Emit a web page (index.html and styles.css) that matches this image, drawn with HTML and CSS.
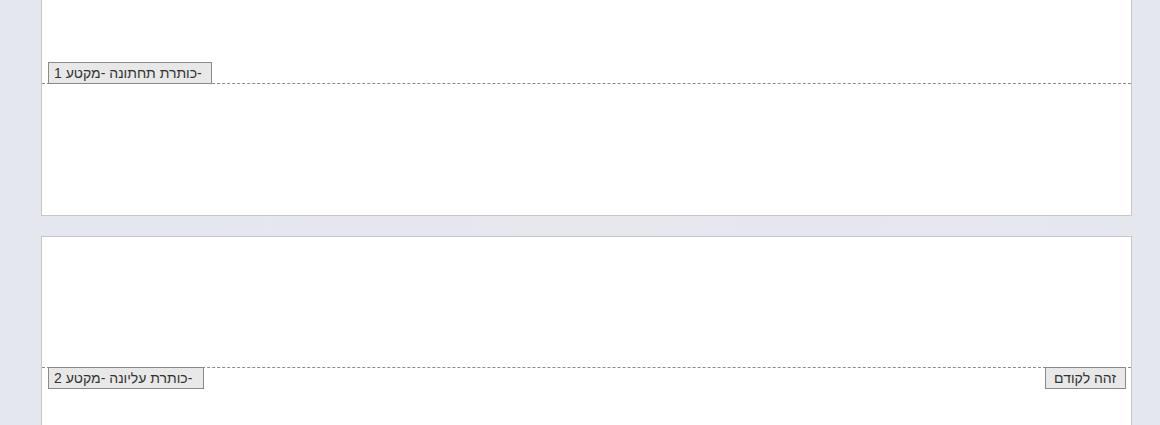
FILE: index.html
```html
<!DOCTYPE html>
<html lang="he">
<head>
<meta charset="utf-8">
<link rel="stylesheet" href="styles.css">
</head>
<body>
<div class="canvas">
  <section class="page page-first">
    <div class="footer-zone">
      <div class="divider divider-bottom">
        <span class="tag">כותרת תחתונה -מקטע 1-</span>
      </div>
    </div>
  </section>
  <section class="page page-second">
    <div class="header-zone">
      <div class="divider divider-top">
        <span class="tag tag-mid">כותרת עליונה -מקטע 2-</span>
        <span class="tag tag-wide">זהה לקודם</span>
      </div>
    </div>
  </section>
</div>
</body>
</html>
```

FILE: styles.css
```css
html, body {
  margin: 0;
  padding: 0;
  height: 100%;
}
body {
  background: linear-gradient(100deg, #e4e7ef 0%, #e7e7ee 50%, #e5e7ef 100%);
  font-family: "Liberation Sans", "DejaVu Sans", sans-serif;
  overflow: hidden;
}
.canvas {
  display: flex;
  flex-direction: column;
  gap: 20px;
  padding-left: 41px;
  width: 1091px;
}
.page {
  background: #fff;
  border: 1px solid #c6c6c6;
  box-sizing: border-box;
}
.page-first {
  border-top: none;
  height: 216px;
  display: flex;
  flex-direction: column;
}
.footer-zone {
  padding-top: 62px;
}
.page-second {
  height: 200px;
}
.header-zone {
  padding-top: 130px;
}
.divider {
  display: flex;
  justify-content: space-between;
  padding: 0 5px 0 6px;
}
.divider-bottom {
  border-bottom: 1px dashed #8c8c8c;
}
.divider-top {
  border-top: 1px dashed #8c8c8c;
}
.divider-bottom .tag {
  margin-bottom: -1px;
}
.divider-top .tag {
  margin-top: -1px;
}
.tag {
  direction: ltr;
  display: inline-block;
  box-sizing: border-box;
  height: 22px;
  line-height: 20px;
  padding: 0 9px 0 5px;
  background: #e8e8e8;
  border: 1px solid #8a8a8a;
  color: #333;
  font-size: 14px;
  white-space: nowrap;
}
.tag-mid {
  padding: 0 11px 0 5px;
}
.tag-wide {
  padding: 0 9px 0 8px;
}
```
